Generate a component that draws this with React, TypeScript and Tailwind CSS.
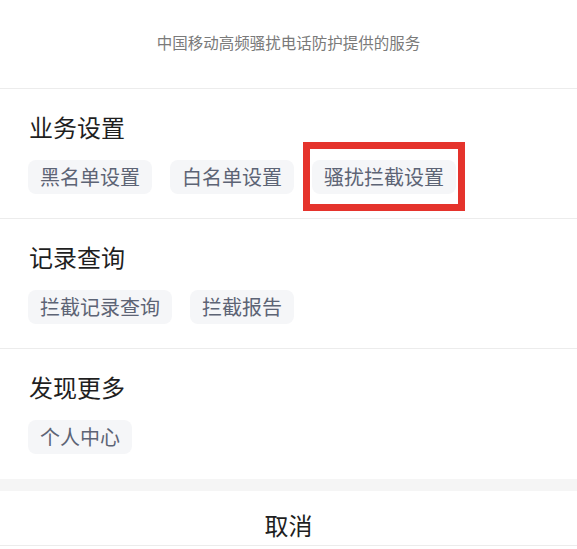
const SECTIONS: { title: string; items: string[] }[] = [
  { title: '业务设置', items: ['黑名单设置', '白名单设置', '骚扰拦截设置'] },
  { title: '记录查询', items: ['拦截记录查询', '拦截报告'] },
  { title: '发现更多', items: ['个人中心'] },
];

function Chip({ label, highlighted }: { label: string; highlighted?: boolean }) {
  return (
    <div className="relative">
      <div className="h-[34px] px-[12px] rounded-lg bg-[#f5f6f8] text-[20px] leading-[34px] text-[#5d6475]">
        {label}
      </div>
      {highlighted && (
        <div className="absolute -left-[9px] -right-[9px] -top-[18px] -bottom-[17px] border-[7px] border-[#e5332c]" />
      )}
    </div>
  );
}

export default function App() {
  return (
    <div
      className="w-[577px] h-[549px] overflow-hidden bg-white"
      style={{ fontFamily: '"Noto Sans CJK SC", "Noto Sans", sans-serif' }}
    >
      {/* 顶部说明 */}
      <div className="h-[89px] border-b border-[#ececec] flex items-center justify-center">
        <span className="text-[15.5px] text-[#7a7a7a] -mt-[2px]">中国移动高频骚扰电话防护提供的服务</span>
      </div>

      {SECTIONS.map((section, i) => (
        <div
          key={section.title}
          className={`h-[130px] px-[28px] pt-[22px] ${i < SECTIONS.length - 1 ? 'border-b border-[#ececec]' : ''}`}
        >
          <div className="text-[24px] leading-[32px] text-[#1f1f1f] pl-[1px]">{section.title}</div>
          <div className="mt-[17px] flex gap-[18px]">
            {section.items.map((item) => (
              <Chip key={item} label={item} highlighted={item === '骚扰拦截设置'} />
            ))}
          </div>
        </div>
      ))}

      <div className="h-[12px] bg-[#f5f5f5]" />

      {/* 取消 */}
      <div className="pt-[18px] pb-[4px] border-b border-[#ececec] text-center text-[24px] leading-[32px] text-[#1f1f1f]">
        取消
      </div>
    </div>
  );
}
